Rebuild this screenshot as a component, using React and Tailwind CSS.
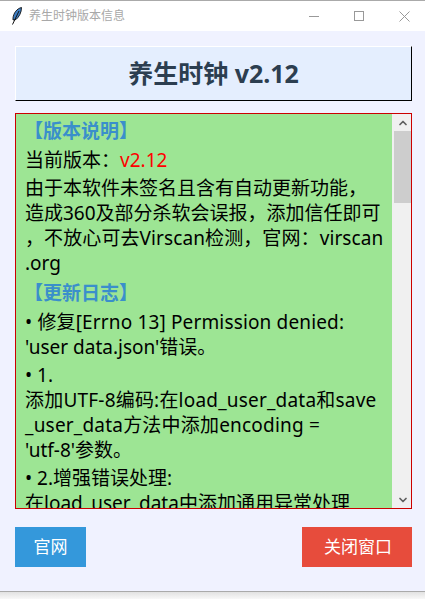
import React from "react";
import { ChevronUp, ChevronDown } from "lucide-react";

const bodyFont = "font-['Noto_Sans','Noto_Sans_CJK_SC',sans-serif]";

const Line = ({ children, className = "" }) => (
  <p className={`whitespace-nowrap h-[25px] leading-[25px] ${className}`}>{children}</p>
);

const Heading = ({ children, className = "" }) => (
  <p className={`whitespace-nowrap h-[25px] leading-[25px] font-bold text-[#3a8fcb] -ml-[1px] ${className}`}>
    {children}
  </p>
);

const App = () => {
  return (
    <div className={`w-[425px] h-[599px] overflow-hidden flex flex-col bg-white ${bodyFont}`}>
      {/* title bar */}
      <div className="h-[31px] shrink-0 border-t border-[#aaaaaa] bg-white flex items-center pl-[11px] text-[#a8a8a8]">
        <svg width="12" height="18" viewBox="0 0 12 18" className="shrink-0">
          <path d="M10.5 0.5 C6 1.5 2.5 6 2 11 L2 13 L5 12.5 C8 10 10.5 5.5 10.5 0.5 Z" fill="#3f7fc4" stroke="#111" strokeWidth="0.9" />
          <path d="M8 4 L1.5 17.5" stroke="#111" strokeWidth="1" fill="none" />
        </svg>
        <span className="ml-[6px] text-[12px] leading-none">养生时钟版本信息</span>
        <div className="ml-auto flex items-center">
          <div className="w-[10px] h-px bg-[#999999] mr-[35px]" />
          <div className="w-[10px] h-[10px] border border-[#999999] mr-[35px]" />
          <svg width="11" height="11" viewBox="0 0 11 11" className="mr-[15px]">
            <path d="M0.5 0.5 L10.5 10.5 M10.5 0.5 L0.5 10.5" stroke="#999999" strokeWidth="1" />
          </svg>
        </div>
      </div>

      {/* window body */}
      <div className="h-[560px] shrink-0 bg-[#f0f2ff] pl-[15px] pr-[13px] pt-[15px] flex flex-col">
        <div className="h-[55px] shrink-0 bg-[#e4eefe] border-t border-l border-t-white border-l-white border-r border-b border-r-black border-b-black flex items-center justify-center">
          <span className="text-[25px] font-bold text-[#2c3e50] leading-none">养生时钟 v2.12</span>
        </div>

        <div className="mt-[12px] h-[396px] shrink-0 border border-[#cc0000] flex bg-[#f0f0f0]">
          <div className="flex-1 bg-[#9de594] overflow-hidden pl-[9px] pt-[5px] text-[19px] text-black">
            <Heading>【版本说明】</Heading>
            <Line className="mt-[4px]">当前版本：<span className="text-[#ff0000]">v2.12</span></Line>
            <div className="mt-[3px]">
              <Line>由于本软件未签名且含有自动更新功能，</Line>
              <Line>造成360及部分杀软会误报，添加信任即可</Line>
              <Line className="tracking-[0.1px]">，不放心可去Virscan检测，官网：virscan</Line>
              <Line>.org</Line>
            </div>
            <Heading className="mt-[5px]">【更新日志】</Heading>
            <Line className="mt-[4px] tracking-[0.15px]">• 修复[Errno 13] Permission denied:</Line>
            <Line>'user data.json'错误。</Line>
            <Line className="mt-[3px]">• 1.</Line>
            <Line className="tracking-[0.2px]">添加UTF-8编码:在load_user_data和save</Line>
            <Line className="tracking-[0.2px]">_user_data方法中添加encoding =</Line>
            <Line>'utf-8'参数。</Line>
            <Line className="mt-[3px]">• 2.增强错误处理:</Line>
            <Line>在load_user_data中添加通用异常处理</Line>
          </div>
          <div className="w-[17px] shrink-0 ml-[2px] flex flex-col bg-[#f0f0f0]">
            <div className="h-[17px] flex items-center justify-center">
              <ChevronUp size={12} strokeWidth={3.5} className="text-[#606060]" />
            </div>
            <div className="h-[72px] bg-[#cdcdcd]" />
            <div className="flex-1" />
            <div className="h-[17px] flex items-center justify-center">
              <ChevronDown size={12} strokeWidth={3.5} className="text-[#606060]" />
            </div>
          </div>
        </div>

        <div className="mt-[18px] flex justify-between shrink-0">
          <button className="w-[71px] h-[40px] bg-[#3498db] text-white text-[17px]">官网</button>
          <button className="w-[110px] h-[40px] pl-[2px] bg-[#e74c3c] text-white text-[17px]">关闭窗口</button>
        </div>

        <div className="flex-1" />
      </div>

      {/* window edge */}
      <div className="flex-1 bg-linear-to-b from-[#e2e2e2] to-[#f8f8f8] border-t border-[#aaaaaa]" />
    </div>
  );
};

export default App;
